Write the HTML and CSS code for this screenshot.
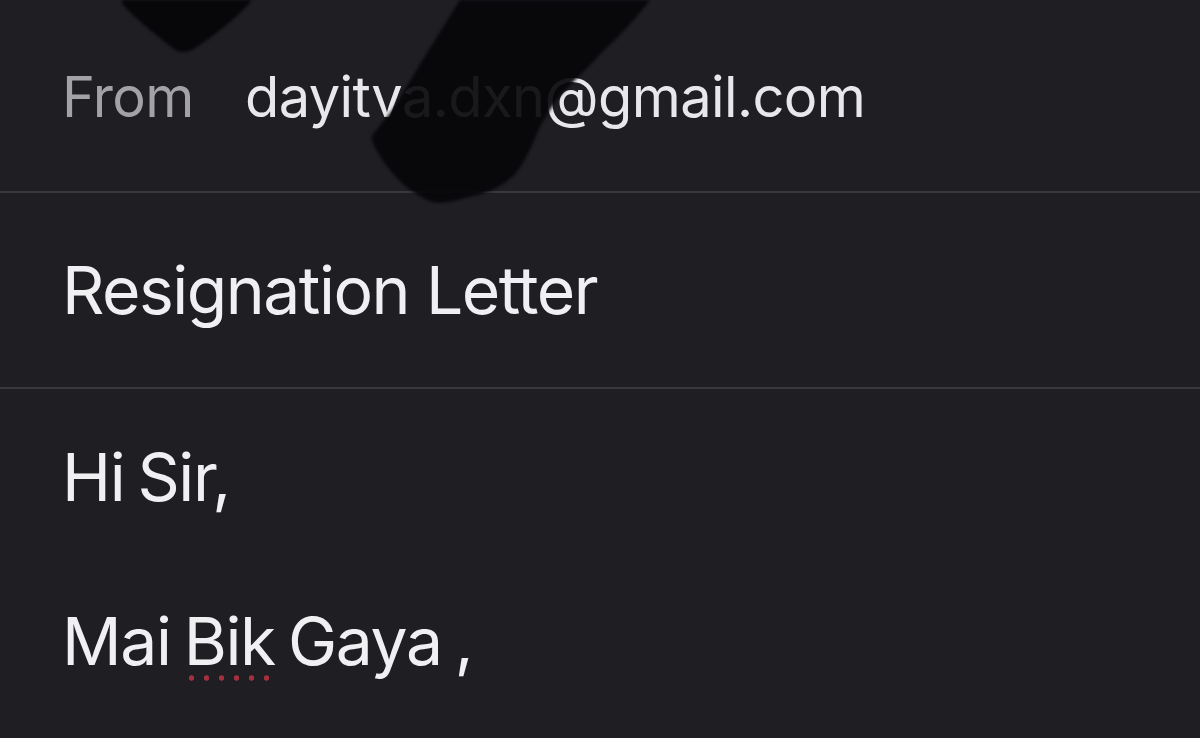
FILE: index.html
```html
<!DOCTYPE html>
<html lang="en">
<head>
    <meta charset="UTF-8">
    <meta name="viewport" content="width=device-width, initial-scale=1.0">
    <title>Resignation Letter</title>
    <link rel="stylesheet" href="styles.css">
</head>
<body>

    <div class="mail">
        <div class="row from-row">
            <span class="label">From</span>
            <span class="value">dayitva.dxn@gmail.com</span>
        </div>

        <div class="row subject">Resignation Letter</div>

        <div class="message">
            <p>Hi Sir,</p>
            <p><br></p>
            <p>Mai <span class="misspelt">Bik</span> Gaya ,</p>
        </div>

        <!-- marker scribbles over the address -->
        <svg class="scribble" width="1200" height="220" viewBox="0 0 1200 220">
            <defs>
                <filter id="soft" x="-10%" y="-10%" width="120%" height="120%" color-interpolation-filters="sRGB">
                    <feGaussianBlur stdDeviation="1.8"/>
                </filter>
            </defs>
            <g filter="url(#soft)">
                <path d="M122 0 L252 0 C240 15 215 35 195 48 C188 53 180 53 174 49 C160 38 140 22 128 10 C124 6 122 3 122 0 Z" fill="#070609"/>
                <path d="M460 0 L650 0 C636 18 618 38 602 52 C588 68 572 82 560 96 C548 112 540 125 535 138 C528 155 522 165 515 174 C500 189 482 195 468 197 C455 201 442 204 432 202 C414 195 396 180 384 162 C376 150 371 142 372 136 C382 122 392 112 400 98 C420 64 440 32 460 0 Z" fill="#060509" fill-opacity="0.92"/>
            </g>
        </svg>
    </div>

</body>
</html>
```

FILE: styles.css
```css
body {
    margin: 0;
    padding: 0;
    background-color: #1e1e23;
    font-family: Inter, "Liberation Sans", Arial, sans-serif;
    color: #f0f0f2;
}

.mail {
    position: relative;
    height: 738px;
    overflow: hidden;
}

.row {
    display: flex;
    align-items: center;
    padding-left: 62px;
    border-bottom: 2px solid #38383d;
}

.from-row {
    height: 193px;
    padding-top: 3px;
    box-sizing: border-box;
    font-size: 56px;
    letter-spacing: -0.6px;
}

.from-row .label {
    width: 183px;
    color: #a2a2a7;
}

.from-row .value {
    color: #e8e8ea;
}

.subject {
    height: 194px;
    font-size: 66px;
    letter-spacing: -1.5px;
}

.message {
    padding: 47px 0 0 62px;
    font-size: 66px;
    line-height: 82px;
    letter-spacing: -1.4px;
    word-spacing: -4px;
}

.message p {
    margin: 0;
}

.misspelt {
    position: relative;
}

.misspelt::after {
    content: "";
    position: absolute;
    left: 0;
    width: 90px;
    bottom: 0;
    height: 6px;
    background-image: radial-gradient(circle, #a3303d 2.4px, transparent 3px);
    background-size: 15px 6px;
    background-repeat: repeat-x;
}

.scribble {
    position: absolute;
    top: 0;
    left: 0;
}
```
